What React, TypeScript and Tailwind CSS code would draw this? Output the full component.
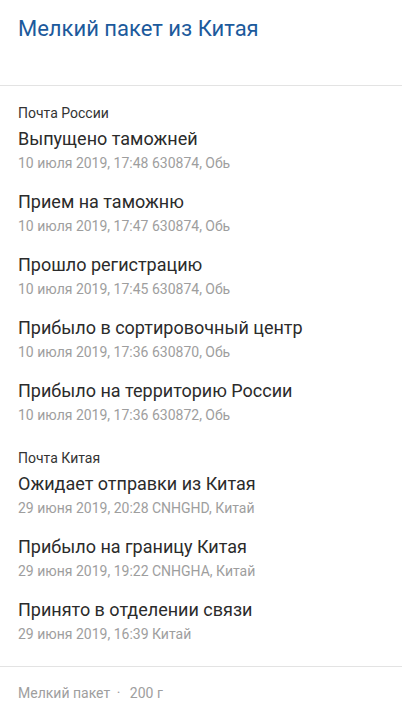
import React from 'react';

type TrackEvent = {
  status: string;
  details: string;
};

type Carrier = {
  name: string;
  events: TrackEvent[];
};

const carriers: Carrier[] = [
  {
    name: 'Почта России',
    events: [
      { status: 'Выпущено таможней', details: '10 июля 2019, 17:48 630874, Обь' },
      { status: 'Прием на таможню', details: '10 июля 2019, 17:47 630874, Обь' },
      { status: 'Прошло регистрацию', details: '10 июля 2019, 17:45 630874, Обь' },
      { status: 'Прибыло в сортировочный центр', details: '10 июля 2019, 17:36 630870, Обь' },
      { status: 'Прибыло на территорию России', details: '10 июля 2019, 17:36 630872, Обь' },
    ],
  },
  {
    name: 'Почта Китая',
    events: [
      { status: 'Ожидает отправки из Китая', details: '29 июня 2019, 20:28 CNHGHD, Китай' },
      { status: 'Прибыло на границу Китая', details: '29 июня 2019, 19:22 CNHGHA, Китай' },
      { status: 'Принято в отделении связи', details: '29 июня 2019, 16:39 Китай' },
    ],
  },
];

export default function App() {
  return (
    <div className="min-h-screen bg-white font-['Roboto',sans-serif]">
      <header className="px-[18px] pt-[15px] pb-[42px] border-b border-[#e3e3e3]">
        <h1 className="text-[22px] leading-[28px] text-[#1c5a9c]">Мелкий пакет из Китая</h1>
      </header>

      <main className="px-[18px] pt-[19px] pb-[22px] flex flex-col gap-[25px]">
        {carriers.map((carrier) => (
          <section key={carrier.name}>
            <div className="text-[14px] leading-[16px] text-[#333333] mb-[6px]">{carrier.name}</div>
            <ul className="flex flex-col gap-[17px]">
              {carrier.events.map((ev, i) => (
                <li key={i}>
                  <div className="text-[18px] leading-[24px] text-[#2b2b2b]">{ev.status}</div>
                  <div className="mt-[2px] text-[14px] leading-[20px] text-[#9e9e9e]">{ev.details}</div>
                </li>
              ))}
            </ul>
          </section>
        ))}
      </main>

      <footer className="px-[18px] pt-[16px] pb-[12px] border-t border-[#e3e3e3] text-[14px] leading-[20px] text-[#9e9e9e]">
        Мелкий пакет <span className="ml-[3px] mr-[6px]">·</span> 200 г
      </footer>
    </div>
  );
}
